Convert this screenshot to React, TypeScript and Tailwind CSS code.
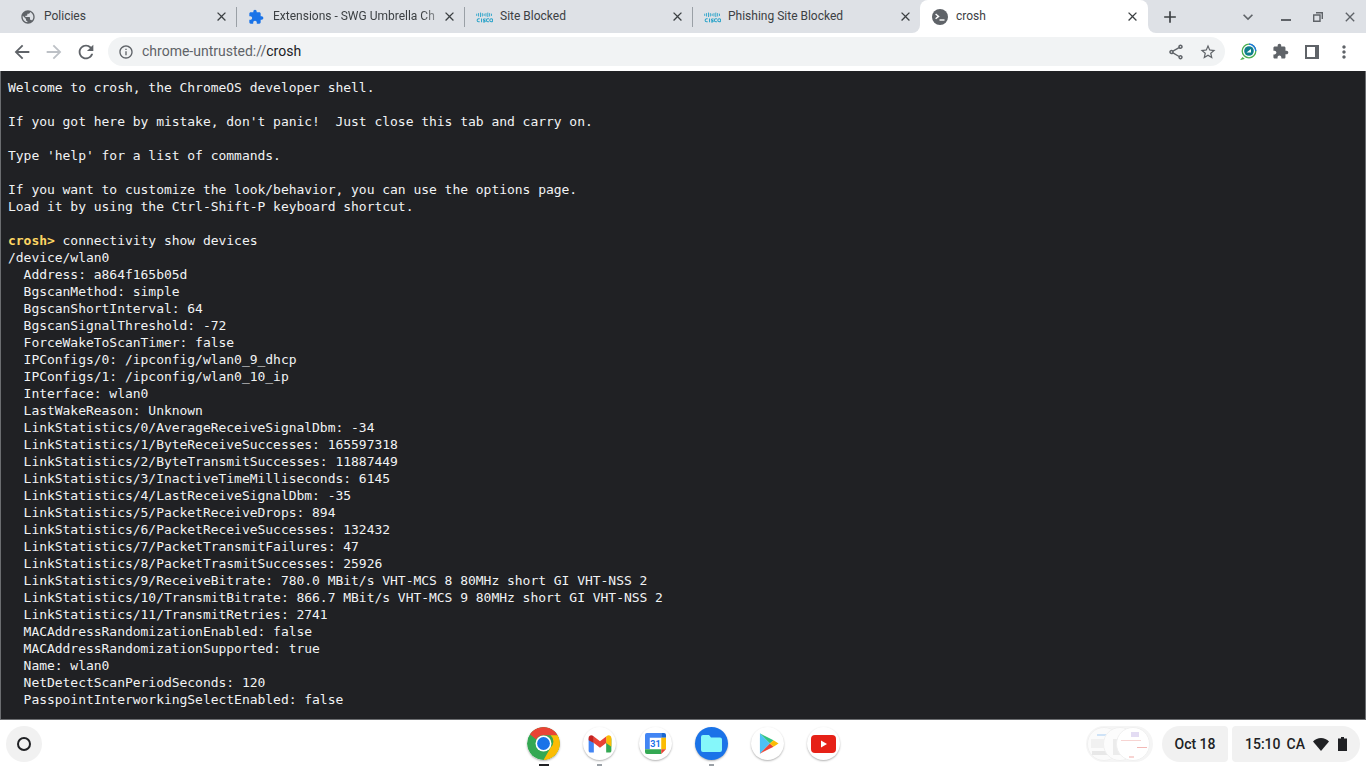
import type { ReactNode } from "react";
import { MdArrowBack, MdArrowForward, MdRefresh, MdInfoOutline, MdOutlineShare, MdStarBorder, MdClose, MdAdd, MdExpandMore, MdMoreVert } from "react-icons/md";

const terminalLines = [
  "Welcome to crosh, the ChromeOS developer shell.",
  "",
  "If you got here by mistake, don't panic!  Just close this tab and carry on.",
  "",
  "Type 'help' for a list of commands.",
  "",
  "If you want to customize the look/behavior, you can use the options page.",
  "Load it by using the Ctrl-Shift-P keyboard shortcut.",
  "",
  "PROMPT",
  "/device/wlan0",
  "  Address: a864f165b05d",
  "  BgscanMethod: simple",
  "  BgscanShortInterval: 64",
  "  BgscanSignalThreshold: -72",
  "  ForceWakeToScanTimer: false",
  "  IPConfigs/0: /ipconfig/wlan0_9_dhcp",
  "  IPConfigs/1: /ipconfig/wlan0_10_ip",
  "  Interface: wlan0",
  "  LastWakeReason: Unknown",
  "  LinkStatistics/0/AverageReceiveSignalDbm: -34",
  "  LinkStatistics/1/ByteReceiveSuccesses: 165597318",
  "  LinkStatistics/2/ByteTransmitSuccesses: 11887449",
  "  LinkStatistics/3/InactiveTimeMilliseconds: 6145",
  "  LinkStatistics/4/LastReceiveSignalDbm: -35",
  "  LinkStatistics/5/PacketReceiveDrops: 894",
  "  LinkStatistics/6/PacketReceiveSuccesses: 132432",
  "  LinkStatistics/7/PacketTransmitFailures: 47",
  "  LinkStatistics/8/PacketTrasmitSuccesses: 25926",
  "  LinkStatistics/9/ReceiveBitrate: 780.0 MBit/s VHT-MCS 8 80MHz short GI VHT-NSS 2",
  "  LinkStatistics/10/TransmitBitrate: 866.7 MBit/s VHT-MCS 9 80MHz short GI VHT-NSS 2",
  "  LinkStatistics/11/TransmitRetries: 2741",
  "  MACAddressRandomizationEnabled: false",
  "  MACAddressRandomizationSupported: true",
  "  Name: wlan0",
  "  NetDetectScanPeriodSeconds: 120",
  "  PasspointInterworkingSelectEnabled: false",
];

function GlobeIcon() {
  return (
    <svg width="16" height="16" viewBox="0 0 24 24" className="shrink-0">
      <path fill="#5f6368" d="M12 2C6.48 2 2 6.48 2 12s4.48 10 10 10 10-4.48 10-10S17.52 2 12 2zm-1 17.93c-3.95-.49-7-3.85-7-7.93 0-.62.08-1.21.21-1.79L9 15v1c0 1.1.9 2 2 2v1.93zm6.9-2.54c-.26-.81-1-1.39-1.9-1.39h-1v-3c0-.55-.45-1-1-1H8v-2h2c.55 0 1-.45 1-1V7h2c1.1 0 2-.9 2-2v-.41c2.93 1.19 5 4.06 5 7.41 0 2.08-.8 3.97-2.1 5.39z" />
    </svg>
  );
}

function PuzzleIcon({ color, size, className }: { color: string; size: number; className?: string }) {
  return (
    <svg width={size} height={size} viewBox="0 0 24 24" className={`shrink-0 ${className ?? ""}`}>
      <path fill={color} d="M20.5 11H19V7c0-1.1-.9-2-2-2h-4V3.5C13 2.12 11.88 1 10.5 1S8 2.12 8 3.5V5H4c-1.1 0-1.99.9-1.99 2v3.8H3.5c1.49 0 2.7 1.21 2.7 2.7s-1.21 2.7-2.7 2.7H2V20c0 1.1.9 2 2 2h3.8v-1.5c0-1.49 1.21-2.7 2.7-2.7s2.7 1.21 2.7 2.7V22H17c1.1 0 2-.9 2-2v-4h1.5c1.38 0 2.5-1.12 2.5-2.5S21.88 11 20.5 11z" />
    </svg>
  );
}

function CiscoIcon() {
  const bars = [[1, 2], [3.5, 3.5], [6, 5], [8.5, 3.5], [11, 2], [13.5, 3.5], [16, 5], [18.5, 3.5], [21, 2]];
  return (
    <svg width="17" height="12" viewBox="0 0 23 16" className="shrink-0">
      {bars.map(([x, h]) => (
        <rect key={x} x={x - 0.6} y={5 - h / 2 - 0.5} width="1.2" height={h + 1} fill="#2aa3c9" />
      ))}
      <g fill="none" stroke="#2aa3c9" strokeWidth="1.4">
        <path d="M5 10.5h-1.5a2 2 0 0 0 0 4H5" />
        <path d="M7.5 10v5" />
        <path d="M13 10.8h-2.2a1 1 0 0 0 0 1.9h1a1 1 0 0 1 0 1.9H9.6" />
        <path d="M17.5 10.5H16a2 2 0 0 0 0 4h1.5" />
        <circle cx="20.6" cy="12.5" r="2" />
      </g>
    </svg>
  );
}

function CroshIcon() {
  return (
    <svg width="16" height="16" viewBox="0 0 16 16" className="shrink-0">
      <circle cx="8" cy="8" r="8" fill="#5f6368" />
      <path d="M3.6 5l3 2.4-3 2.4" fill="none" stroke="#fff" strokeWidth="1.4" />
      <path d="M7.5 11h5" stroke="#fff" strokeWidth="1.4" />
    </svg>
  );
}

function TabItem({ icon, title, fade, className, gap }: { icon: ReactNode; title: string; fade?: boolean; className: string; gap: string }) {
  return (
    <div className={`${className} h-[33px] flex items-center shrink-0 pr-[7.5px]`}>
      {icon}
      <span className={`${gap} -mt-px flex-1 min-w-0 text-[12px] text-[#3c4043] whitespace-nowrap ${fade ? "[mask-image:linear-gradient(to_right,black_88%,rgba(0,0,0,0.25))]" : ""}`}>
        {title}
      </span>
      <MdClose size={15} color="#3c4043" className="shrink-0" />
    </div>
  );
}

function TabDivider() {
  return <div className="w-px h-[20px] bg-[#9aa0a6] shrink-0" />;
}

function ChromeLogo() {
  return (
    <svg width="33" height="33" viewBox="0 0 34 34">
      <circle cx="17" cy="17" r="17" fill="#34a853" />
      <path d="M17 0A17 17 0 0 1 31.7 8.500H17a8.500 8.500 0 0 0-7.400 4.300L2.900 7.500A17 17 0 0 1 17 0z" fill="#ea4335" />
      <path d="M31.700 8.500A17 17 0 0 1 17 34l7.400-12.800a8.500 8.500 0 0 0-.1-12.700z" fill="#fbbc04" />
      <circle cx="17" cy="17" r="8.200" fill="#fff" />
      <circle cx="17" cy="17" r="6.600" fill="#1a73e8" />
    </svg>
  );
}

function GmailLogo() {
  return (
    <svg width="24" height="18" viewBox="0 0 24 19">
      <path d="M0 3.5v13.3A1.8 1.8 0 0 0 1.8 18.6H5.5V8.5z" fill="#4285f4" />
      <path d="M24 3.5v13.3a1.8 1.8 0 0 1-1.8 1.8H18.500V8.5z" fill="#34a853" />
      <path d="M18.5 1.5v7l5.500 4V3c0-2.400-2.800-3.600-4.500-2.200z" fill="#fbbc04" />
      <path d="M5.500 8.500v-7L12 6.600l6.500-5.100v7L12 13.400z" fill="#ea4335" />
      <path d="M0 3v2.500l5.500 3v-7L4.500 .8C2.800-.6 0 .6 0 3z" fill="#c5221f" />
    </svg>
  );
}

function CalendarLogo() {
  return (
    <svg width="21" height="21" viewBox="0 0 22 22">
      <rect width="22" height="22" rx="2" fill="#fff" />
      <path d="M2 0h15v5H5v12H0V2a2 2 0 0 1 2-2z" fill="#4285f4" />
      <path d="M17 0h3a2 2 0 0 1 2 2v3h-5z" fill="#1967d2" />
      <path d="M17 5h5v12h-5z" fill="#fbbc04" />
      <path d="M0 17h17v5H2a2 2 0 0 1-2-2z" fill="#34a853" />
      <path d="M17 17h5l-5 5z" fill="#ea4335" />
      <text x="11" y="15" textAnchor="middle" fontSize="9.5" fontWeight="700" fill="#1a73e8" fontFamily="Roboto, sans-serif">31</text>
    </svg>
  );
}

function FilesLogo() {
  return (
    <svg width="21" height="17" viewBox="0 0 21 17">
      <path d="M2 0h6l2 2.5h9a2 2 0 0 1 2 2V15a2 2 0 0 1-2 2H2a2 2 0 0 1-2-2V2a2 2 0 0 1 2-2z" fill="#85f7fa" />
    </svg>
  );
}

function PlayLogo() {
  return (
    <svg width="20" height="23" viewBox="0 0 22 24" className="ml-[2px]">
      <path d="M1 .8v22.400L12 12z" fill="#4cc1f5" />
      <path d="M1 .8L16 8.500 12 12z" fill="#33c481" />
      <path d="M1 23.200L16 15.500 12 12z" fill="#ea4335" />
      <path d="M16 8.500l5.500 3.500-5.500 3.500L12 12z" fill="#fbbc04" />
    </svg>
  );
}

function YoutubeLogo() {
  return (
    <svg width="25" height="18" viewBox="0 0 25 18">
      <rect width="25" height="18" rx="4" fill="#e62117" />
      <path d="M10 5.500l6 3.500-6 3.500z" fill="#fff" />
    </svg>
  );
}

function ShelfApp({ children, round, dot }: { children: ReactNode; round?: string; dot?: string }) {
  return (
    <div className="w-[33px] h-[48px] flex flex-col items-center relative">
      <div className={`mt-[7px] w-[33px] h-[33px] rounded-full flex items-center justify-center shadow-[0_1px_2px_rgba(0,0,0,0.3)] overflow-hidden shrink-0 ${round ?? "bg-white"}`}>
        {children}
      </div>
      {dot && <div className={`absolute bottom-[2px] h-[2px] ${dot}`} />}
    </div>
  );
}

export default function App() {
  return (
    <div className="w-[1366px] h-[768px] overflow-hidden flex flex-col bg-white font-['Roboto',sans-serif]">
      {/* Tab strip */}
      <div className="h-[33px] shrink-0 bg-[#dee1e6] flex items-center relative">
        <TabItem icon={<GlobeIcon />} className="w-[236px] pl-[20px]" gap="ml-[8px]" title="Policies" />
        <TabDivider />
        <TabItem icon={<PuzzleIcon color="#1a73e8" size={16} />} className="w-[227px] pl-[11px]" gap="ml-[9px]" title="Extensions - SWG Umbrella Ch" fade />
        <TabDivider />
        <TabItem icon={<CiscoIcon />} className="w-[227px] pl-[11px]" gap="ml-[7px]" title="Site Blocked" />
        <TabDivider />
        <TabItem icon={<CiscoIcon />} className="w-[227px] pl-[11px]" gap="ml-[7px]" title="Phishing Site Blocked" />
        <div className="w-[228px] h-[33px] bg-white rounded-t-[8px] shrink-0 flex items-center pl-[12px] pr-[8px] relative">
          <CroshIcon />
          <span className="ml-[8px] -mt-px flex-1 text-[12px] text-[#3c4043]">crosh</span>
          <MdClose size={15} color="#3c4043" />
          <div className="absolute right-[-8px] bottom-0 w-[8px] h-[8px] bg-white" />
          <div className="absolute right-[-8px] bottom-0 w-[8px] h-[8px] bg-[#dee1e6] rounded-bl-[8px]" />
          <div className="absolute left-[-8px] bottom-0 w-[8px] h-[8px] bg-white" />
          <div className="absolute left-[-8px] bottom-0 w-[8px] h-[8px] bg-[#dee1e6] rounded-br-[8px]" />
        </div>
        <MdAdd size={20} color="#3c4043" className="ml-[12px]" />
        <MdExpandMore size={20} color="#5f6368" className="ml-[58px]" />
        <div className="ml-[23px] mt-[7px] w-[10px] h-[2px] bg-[#5f6368]" />
        <svg width="10" height="10" viewBox="0 0 10 10" className="ml-[22px]">
          <path d="M3 .7h6.300V7M.7 3h6.300v6.300H.7z" fill="none" stroke="#5f6368" strokeWidth="1.4" />
        </svg>
        <MdClose size={16} color="#5f6368" className="ml-[19px]" />
      </div>

      {/* Toolbar */}
      <div className="h-[37px] shrink-0 bg-white flex items-center">
        <MdArrowBack size={22} color="#5f6368" className="ml-[11px]" />
        <MdArrowForward size={22} color="#bdc1c6" className="ml-[10px]" />
        <MdRefresh size={22} color="#5f6368" className="ml-[10px]" />
        <div className="ml-[11px] w-[1117px] h-[29px] rounded-full bg-[#f1f3f4] flex items-center pl-[10px] pr-[8px]">
          <MdInfoOutline size={16} color="#5f6368" />
          <span className="ml-[8px] text-[14px] text-[#5f6368]">
            chrome-untrusted://<span className="text-[#202124]">crosh</span>
          </span>
          <MdOutlineShare size={18} color="#5f6368" className="ml-auto" />
          <MdStarBorder size={18} color="#5f6368" className="ml-[14px]" />
        </div>
        <svg width="17" height="17" viewBox="0 0 17 17" className="ml-[15px]">
          <path d="M3 14.5l-1.200 1.500 2.500-.6" fill="none" stroke="#4caf50" strokeWidth="1.3" />
          <circle cx="9" cy="8" r="6.800" fill="none" stroke="#4caf50" strokeWidth="1.3" />
          <path d="M9 1.200a6.800 6.800 0 0 1 6.800 6.800" fill="none" stroke="#1a73e8" strokeWidth="1.3" />
          <circle cx="9" cy="8" r="4.800" fill="#0f7f8c" />
          <path d="M6.500 9.500l4.500-3.500v3.500z" fill="#fff" />
        </svg>
        <PuzzleIcon color="#5f6368" size={17} className="ml-[15px]" />
        <svg width="14" height="14" viewBox="0 0 14 14" className="ml-[16px]">
          <path fillRule="evenodd" d="M0 0h14v14H0zM2 2v10h8V2z" fill="#5f6368" />
        </svg>
        <MdMoreVert size={20} color="#5f6368" className="ml-[15px]" />
      </div>

      {/* Terminal */}
      <div className="h-[649px] shrink-0 bg-[#202124] border border-[#6b6d70] border-t-0 pt-[8px] pl-[7px] font-['DejaVu_Sans_Mono',monospace] text-[13px] leading-[17px] tracking-[-0.03px] text-[#f1f3f4] whitespace-pre overflow-hidden mt-px">
        {terminalLines.map((line, i) =>
          line === "PROMPT" ? (
            <div key={i} className="h-[17px]">
              <span className="font-bold text-[#fdd663]">crosh&gt;</span> connectivity show devices
            </div>
          ) : (
            <div key={i} className="h-[17px]">{line}</div>
          )
        )}
      </div>

      {/* Shelf */}
      <div className="flex-1 bg-white flex items-center relative">
        <div className="ml-[6px] w-[36px] h-[36px] rounded-full bg-[#f1f1f1] flex items-center justify-center">
          <div className="w-[14px] h-[14px] rounded-full border-2 border-[#202124]" />
        </div>
        <div className="absolute left-[527px] top-0 flex gap-[23px]">
          <ShelfApp round="bg-transparent" dot="w-[10px] bg-[#202124]">
            <ChromeLogo />
          </ShelfApp>
          <ShelfApp dot="w-[5px] bg-[#9aa0a6]">
            <GmailLogo />
          </ShelfApp>
          <ShelfApp>
            <CalendarLogo />
          </ShelfApp>
          <ShelfApp round="bg-[#1a73e8]" dot="w-[5px] bg-[#9aa0a6]">
            <FilesLogo />
          </ShelfApp>
          <ShelfApp>
            <PlayLogo />
          </ShelfApp>
          <ShelfApp>
            <YoutubeLogo />
          </ShelfApp>
        </div>
        <div className="ml-auto flex items-center mr-[6px]">
          <div className="w-[67px] h-[36px] rounded-full bg-[#f5f5f5] relative overflow-hidden blur-[0.6px]">
            <div className="absolute left-[1px] top-[1px] w-[34px] h-[34px] rounded-full bg-[#fbfbfb] border border-[#f0f0f0]">
              <div className="ml-[9px] mt-[6px] w-[12px] h-[2px] bg-[#cfe3f7]" />
              <div className="ml-[3px] mt-[3px] w-[24px] h-[9px] bg-[#f1f1f1]" />
              <div className="ml-[4px] mt-[3px] w-[20px] h-[4px] bg-[#e8e8e8]" />
            </div>
            <div className="absolute left-[17px] top-[1px] w-[34px] h-[34px] rounded-full bg-[#fcfcfc] border border-[#f0f0f0]">
              <div className="ml-[9px] mt-[11px] w-[7px] h-[16px] bg-[#ececec]" />
            </div>
            <div className="absolute left-[30px] top-[1px] w-[34px] h-[34px] rounded-full bg-white border border-[#f0f0f0]">
              <div className="ml-[14px] mt-[4px] w-[8px] h-[5px] bg-[#e3dcf3]" />
              <div className="ml-[4px] mt-[3px] w-[20px] h-px bg-[#f7d4d2]" />
              <div className="ml-[20px] mt-[6px] w-[10px] h-px bg-[#f2b8b5]" />
              <div className="ml-[12px] mt-[8px] w-[5px] h-[2px] bg-[#f7d4d2]" />
            </div>
          </div>
          <div className="ml-[9px] w-[66px] h-[36px] rounded-l-[18px] rounded-r-[4px] bg-[#f1f1f1] flex items-center justify-center text-[14px] font-medium text-[#202124]">
            Oct 18
          </div>
          <div className="ml-[4px] w-[128px] h-[36px] rounded-r-[18px] rounded-l-[4px] bg-[#f1f1f1] flex items-center pl-[13px] text-[14px] font-medium text-[#202124]">
            <span>15:10</span>
            <span className="ml-[6px]">CA</span>
            <svg width="16" height="13" viewBox="0 0 16 13" className="ml-[8px]">
              <path d="M0 3.5C2 1.500 5 0 8 0s6 1.500 8 3.500L8 13z" fill="#202124" />
            </svg>
            <svg width="9" height="14" viewBox="0 0 9 14" className="ml-[9px]">
              <path d="M3 0h3v1.500h3V14H0V1.500h3z" fill="#202124" />
            </svg>
          </div>
        </div>
      </div>
    </div>
  );
}
